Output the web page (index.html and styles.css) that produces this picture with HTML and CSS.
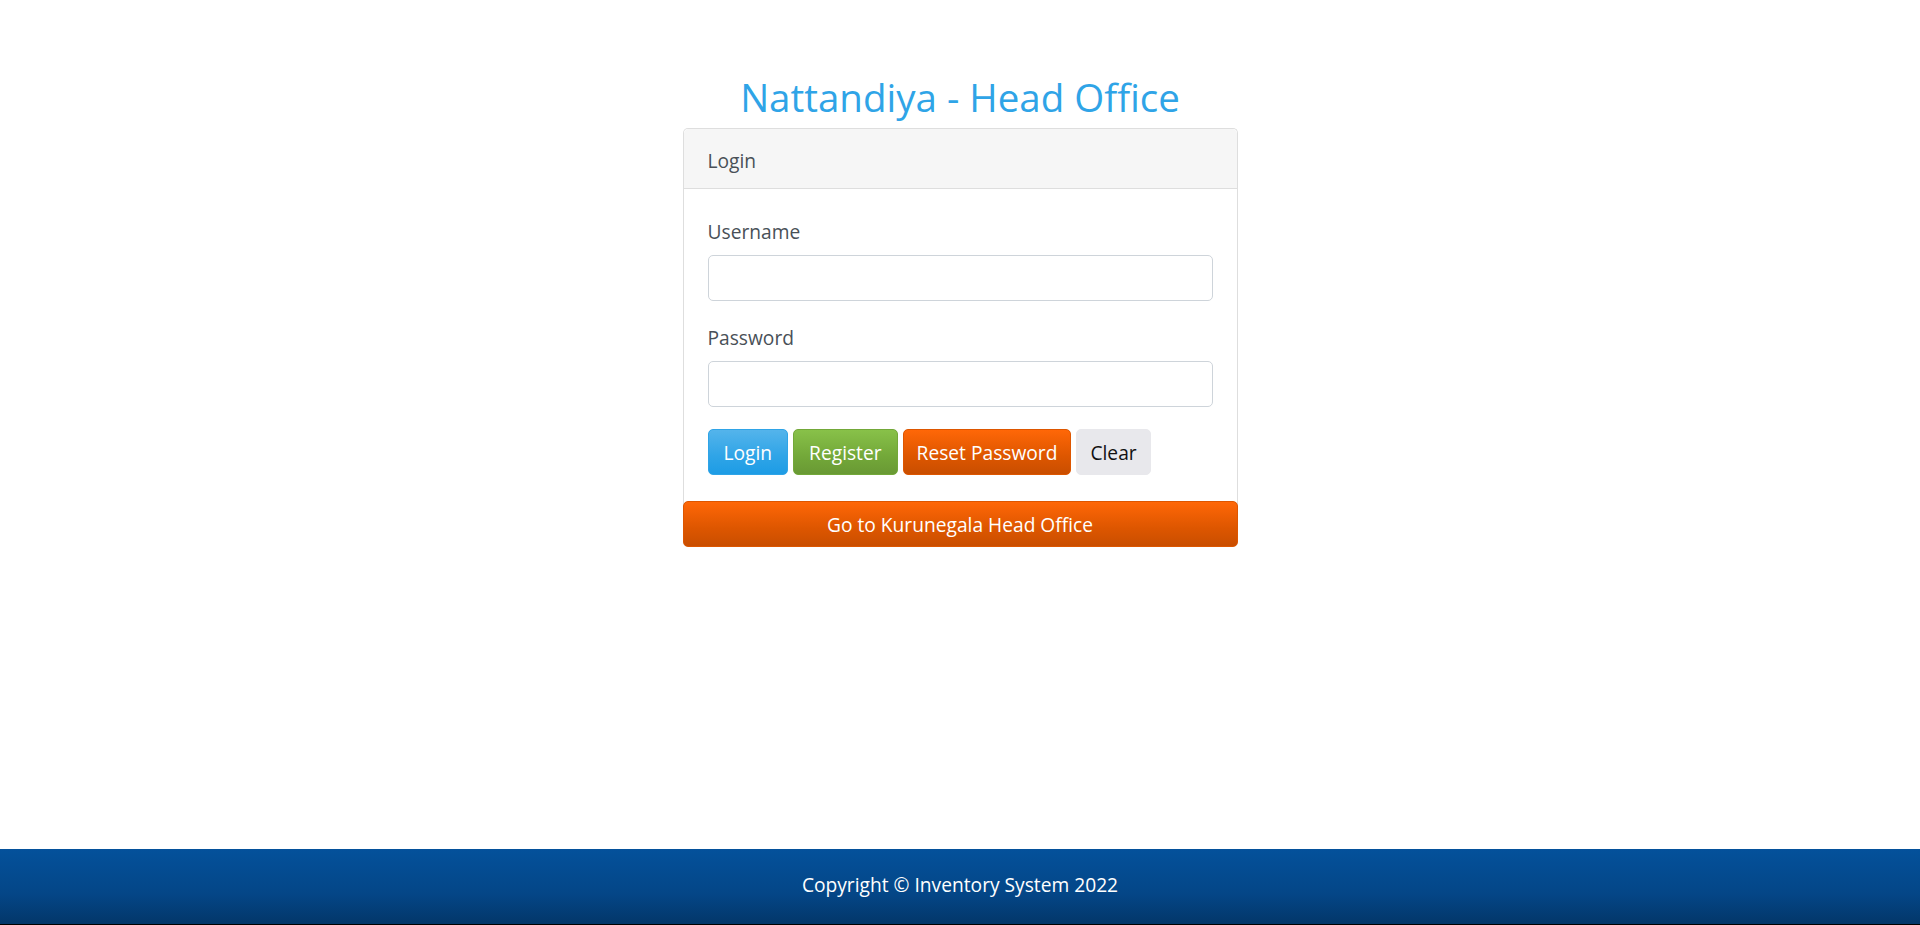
FILE: index.html
```html
<!DOCTYPE html>
<html lang="en">
<head>
<meta charset="utf-8">
<title>Nattandiya - Head Office</title>
<link rel="stylesheet" href="styles.css">
</head>
<body>
<main class="page">
  <div class="wrap">
    <h1 class="title">Nattandiya - Head Office</h1>
    <div class="card">
      <div class="card-header">Login</div>
      <form class="card-body">
        <div class="form-group">
          <label class="label" for="username">Username</label>
          <input class="input" id="username" type="text">
        </div>
        <div class="form-group">
          <label class="label" for="password">Password</label>
          <input class="input" id="password" type="password">
        </div>
        <div class="actions">
          <button type="button" class="btn btn-primary">Login</button>
          <button type="button" class="btn btn-success">Register</button>
          <button type="button" class="btn btn-warning btn-narrow">Reset Password</button>
          <button type="button" class="btn btn-light btn-narrow">Clear</button>
        </div>
      </form>
      <button type="button" class="btn btn-warning btn-block">Go to Kurunegala Head Office</button>
    </div>
  </div>
</main>
<footer class="footer">Copyright © Inventory System 2022</footer>
</body>
</html>
```

FILE: styles.css
```css
* { box-sizing: border-box; }
html, body { margin: 0; padding: 0; height: 100%; }
body {
  font-family: "Open Sans", "Noto Sans", "Liberation Sans", sans-serif;
  font-size: 19.2px;
  line-height: 1.5;
  color: #495057;
  background: #fff;
  display: flex;
  flex-direction: column;
  min-height: 925px;
}
.page { flex: 1; }
.wrap {
  width: 555px;
  margin: 0 auto;
  padding-top: 74px;
}
.title {
  margin: 0 0 8px;
  font-weight: 400;
  font-size: 38.5px;
  line-height: 1.2;
  color: #2fa4e7;
  text-align: center;
}
.card {
  border: 1px solid #dedede;
  border-bottom: 0;
  border-radius: 5px;
  background: #fff;
}
.card-header {
  background: #f6f6f6;
  border-bottom: 1px solid #dedede;
  border-radius: 5px 5px 0 0;
  padding: 17px 24px 13px;
  line-height: 29px;
}
.card-body {
  margin: 0;
  padding: 28px 24px 26px;
}
.form-group { margin-bottom: 22px; }
.label {
  display: block;
  line-height: 29px;
  margin-bottom: 9px;
}
.input {
  display: block;
  width: 100%;
  height: 46px;
  border: 1px solid #ced4da;
  border-radius: 5px;
  padding: 7px 14px;
  font: inherit;
  color: #495057;
  background: #fff;
}
.actions {
  display: flex;
  gap: 5px;
}
.btn {
  font: inherit;
  line-height: 29px;
  height: 46px;
  padding: 7px 15px;
  border: 1px solid transparent;
  border-radius: 5px;
  color: #fff;
  cursor: pointer;
}
.btn-narrow { padding: 7px 13px; }
.btn-primary {
  background-image: linear-gradient(#54b4eb, #2fa4e7 60%, #1d9ce5);
  border-color: #2fa4e7;
}
.btn-success {
  background-image: linear-gradient(#88c149, #73a839 60%, #699934);
  border-color: #73a839;
}
.btn-warning {
  background-image: linear-gradient(#ff6707, #dd5600 60%, #c94e00);
  border-color: #dd5600;
}
.btn-light {
  background: #e8e8ec;
  border-color: #e8e8ec;
  color: #111;
}
.btn-block {
  display: block;
  width: calc(100% + 2px);
  margin: 0 -1px;
}
.footer {
  height: 76px;
  background-image: linear-gradient(#04519b, #044687 60%, #033769);
  border-bottom: 1px solid #000;
  color: #fff;
  display: flex;
  align-items: center;
  justify-content: center;
  padding-bottom: 2px;
}
```
